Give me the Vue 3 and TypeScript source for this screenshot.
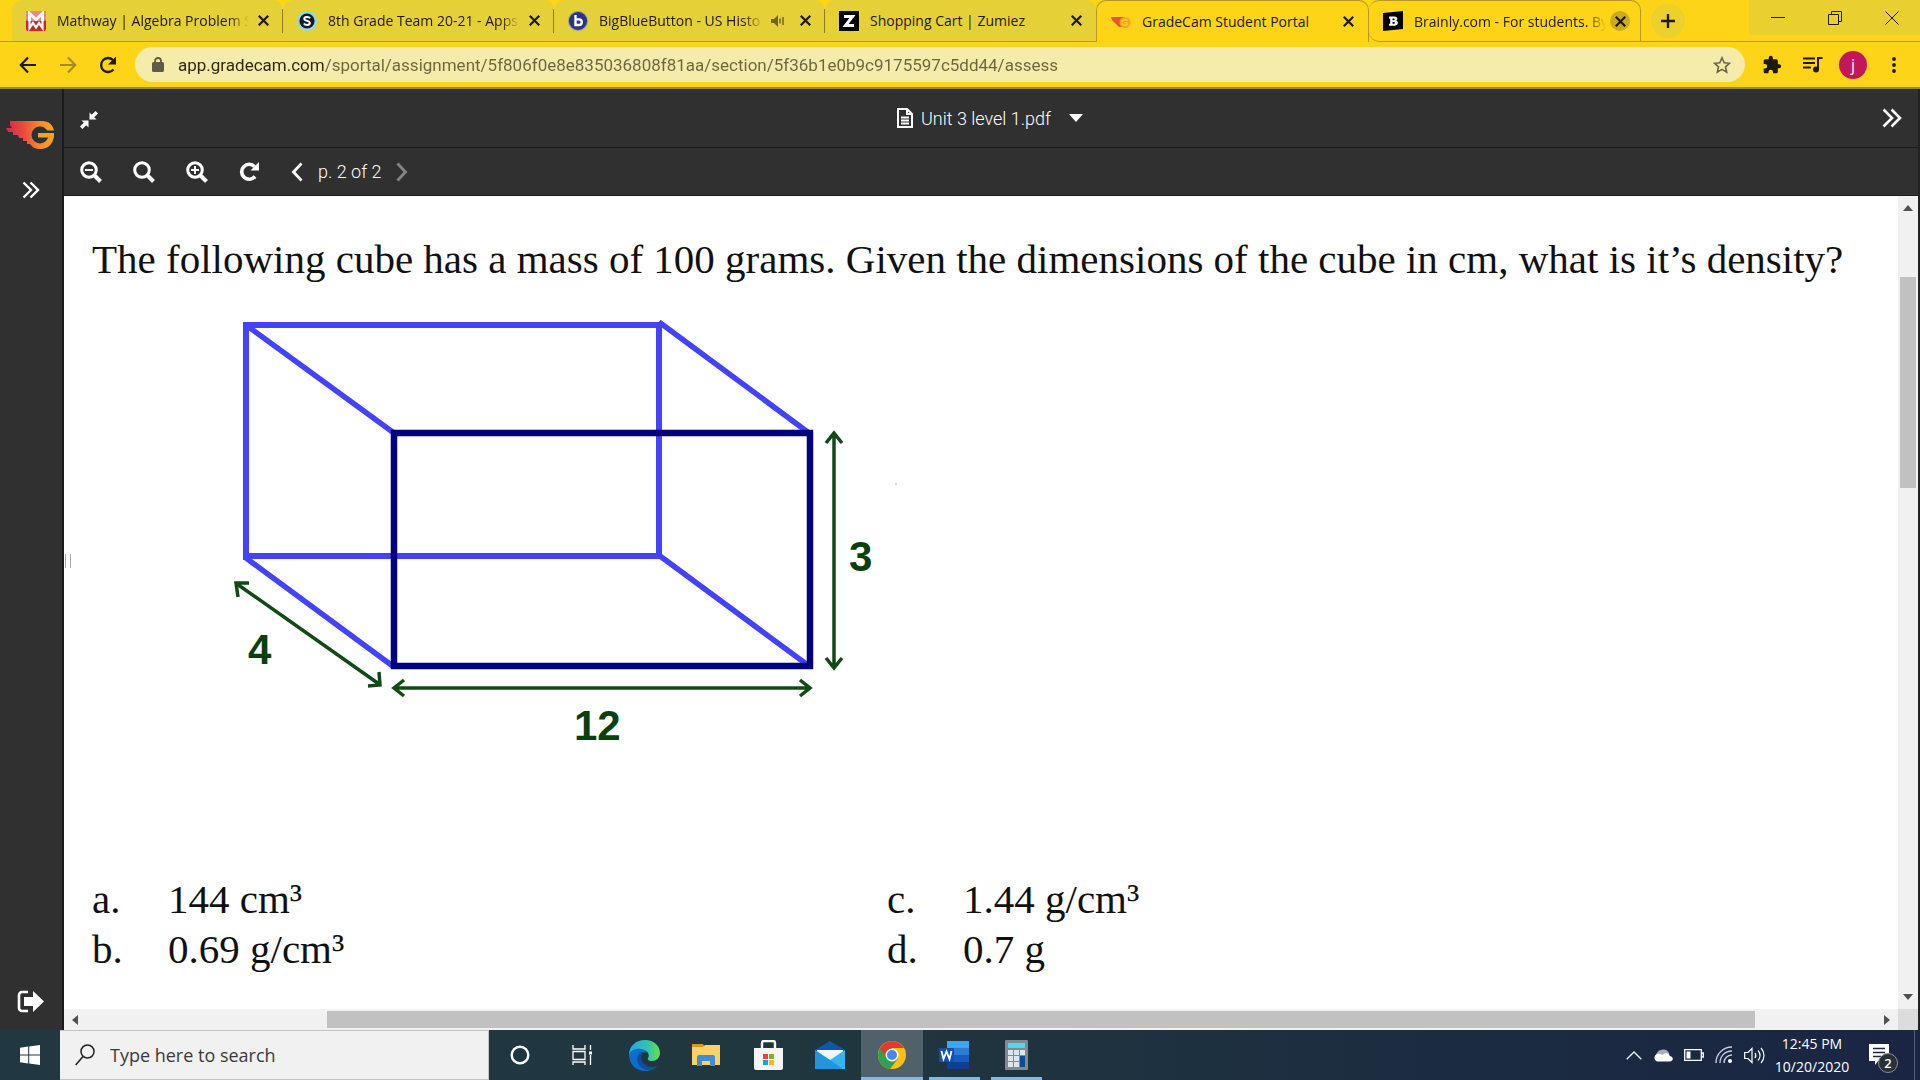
<script setup lang="ts">
import { ref } from 'vue'

interface Tab {
  id: string
  title: string
  state: 'idle' | 'active' | 'hover'
  cut?: boolean
  audio?: boolean
}

const tabs: Tab[] = [
  { id: 'mathway', title: 'Mathway | Algebra Problem S', state: 'idle', cut: true },
  { id: 'schoology', title: '8th Grade Team 20-21 - Apps', state: 'idle', cut: true },
  { id: 'bbb', title: 'BigBlueButton - US Histo', state: 'idle', cut: true, audio: true },
  { id: 'zumiez', title: 'Shopping Cart | Zumiez', state: 'idle' },
  { id: 'gradecam', title: 'GradeCam Student Portal', state: 'active' },
  { id: 'brainly', title: 'Brainly.com - For students. By', state: 'hover', cut: true },
]

const url = ref('app.gradecam.com/sportal/assignment/5f806f0e8e835036808f81aa/section/5f36b1e0b9c9175597c5dd44/assess')
const query = ref('')

const answers = [
  { key: 'a.', text: '144 cm³' },
  { key: 'c.', text: '1.44 g/cm³' },
  { key: 'b.', text: '0.69 g/cm³' },
  { key: 'd.', text: '0.7 g' },
]
</script>

<template>
  <div class="screen">
    <header class="browser">
      <div class="strip">
        <div class="strip-start"></div>
        <div class="tabs" role="tablist">
          <div v-for="t in tabs" :key="t.id" class="tab" :class="t.state" role="tab" :aria-selected="t.state === 'active'">
            <svg class="fav" viewBox="0 0 20 20" aria-hidden="true">
              <g v-if="t.id === 'mathway'">
                <rect width="20" height="20" rx="2" fill="#c9252b" />
                <rect width="20" height="10" rx="2" fill="#e58a84" />
                <path d="M3.500 10V2.500l6.500 6 6.500-6V10" fill="none" stroke="#fff" stroke-width="3" />
                <path d="M3.500 10v7l3.500-5 3 4.500 3-4.500 3.500 5v-7" fill="none" stroke="#fff" stroke-width="2.200" />
              </g>
              <g v-else-if="t.id === 'schoology'">
                <circle cx="10" cy="10" r="10" fill="#8ed8ee" />
                <circle cx="10" cy="10" r="7.600" fill="#151c22" />
                <path d="M13 7.200C12 5.600 7.300 5.500 7.300 7.800c0 2.600 5.600 1.600 5.600 4.300 0 2.500-5 2.300-6 .4" fill="none" stroke="#fff" stroke-width="2" />
              </g>
              <g v-else-if="t.id === 'bbb'">
                <circle cx="10" cy="10" r="10" fill="#8d95b8" />
                <circle cx="10" cy="10" r="9" fill="#28367f" />
                <path d="M7.500 4v10h3.500a2.800 2.800 0 0 0 0-5.600H7.500" fill="none" stroke="#fff" stroke-width="2.400" />
              </g>
              <g v-else-if="t.id === 'zumiez'">
                <rect width="20" height="20" fill="#000" />
                <path d="M5 5.500h8.500L6.500 14.500H15" fill="none" stroke="#fff" stroke-width="3" />
              </g>
              <g v-else-if="t.id === 'gradecam'">
                <path d="M0 5h13l3 3-5 7H8L1 8z" fill="#e8542c" />
                <circle cx="14" cy="10.500" r="5.500" fill="#f5a32a" />
                <path d="M16.500 8.500c-2-2-5.500-.5-5.500 2s3 3.500 5 2v-1.700h-2.500" fill="none" stroke="#fed418" stroke-width="1.400" />
              </g>
              <g v-else>
                <path d="M0 2l20-2v18L0 20z" fill="#000" />
                <path d="M6 5.500h5.500c3.500 0 3.500 4 1.500 4.300 3 .4 2.500 4.900-1.500 4.900H6v-2h1.200v-5H6zM9.500 7.500v1.700h1.300c1.200 0 1.200-1.700 0-1.700zM9.500 10.900v1.800h1.500c1.300 0 1.300-1.800 0-1.800z" fill="#fff" fill-rule="evenodd" />
              </g>
            </svg>
            <span class="title" :class="{ cut: t.cut }">{{ t.title }}</span>
            <svg v-if="t.audio" class="audio" viewBox="0 0 14 12" aria-label="Playing audio">
              <path d="M0 4h3l4-4v12L3 8H0z" fill="#6e651f" />
              <path d="M9 3.500v5M12 2v8" stroke="#6e651f" stroke-width="1.500" />
            </svg>
            <button class="tab-close" type="button" aria-label="Close tab">
              <svg viewBox="0 0 10 10"><path d="M.7.7l8.600 8.600M9.300.7L.7 9.300" stroke="#1d1a06" stroke-width="2" /></svg>
            </button>
          </div>
        </div>
        <div class="strip-add">
          <button type="button" aria-label="New tab">
            <svg viewBox="0 0 14 14"><path d="M7 0v14M0 7h14" stroke="#1d1a06" stroke-width="2.400" /></svg>
          </button>
        </div>
        <div class="window-keys">
          <button type="button" aria-label="Minimize"><svg viewBox="0 0 14 14"><path d="M0 6.500h14" /></svg></button>
          <button type="button" aria-label="Restore"><svg viewBox="0 0 14 14"><path d="M.5 3.500h10v10H.5zM3.500 3V.5h10v10H11" /></svg></button>
          <button type="button" aria-label="Close"><svg viewBox="0 0 14 14"><path d="M.5.5l13 13M13.500.5l-13 13" /></svg></button>
        </div>
      </div>

      <div class="nav">
        <button type="button" aria-label="Back"><svg width="18" height="18" viewBox="0 0 18 18"><path d="M17 9H2M9 1.500L1.800 9 9 16.500" fill="none" stroke="#1d1a06" stroke-width="2.200" /></svg></button>
        <button type="button" aria-label="Forward"><svg width="18" height="18" viewBox="0 0 18 18"><path d="M1 9h15M9 1.500L16.200 9 9 16.500" fill="none" stroke="#a48c18" stroke-width="2.200" /></svg></button>
        <button type="button" aria-label="Reload"><svg width="20" height="18" viewBox="0 0 20 18"><path d="M15.500 13.500A7 7 0 1 1 15 4" fill="none" stroke="#1d1a06" stroke-width="2.300" /><path d="M18 .5v8h-8z" fill="#1d1a06" /></svg></button>
        <label class="address">
          <svg width="12" height="15" viewBox="0 0 12 15" aria-hidden="true"><rect y="5" width="12" height="10" rx="1.500" fill="#5f5b45" /><path d="M3 6V4a3 3 0 0 1 6 0v2" fill="none" stroke="#5f5b45" stroke-width="1.800" /></svg>
          <input v-model="url" type="text" aria-label="Address" />
          <svg width="18" height="18" viewBox="0 0 18 18" aria-hidden="true"><path d="M9 1.800l2.200 5 5.300.5-4 3.600 1.200 5.300L9 13.400l-4.700 2.800 1.200-5.300-4-3.600 5.300-.5z" fill="none" stroke="#6a6648" stroke-width="1.600" /></svg>
        </label>
        <div class="extras">
          <button type="button" aria-label="Extensions"><svg width="20" height="20" viewBox="0 0 24 24"><path d="M20.500 11H19V7c0-1.100-.9-2-2-2h-4V3.500a2.500 2.500 0 0 0-5 0V5H4c-1.100 0-2 .9-2 2v3.800h1.500a2.700 2.700 0 0 1 0 5.400H2V20c0 1.100.9 2 2 2h3.800v-1.500a2.700 2.700 0 0 1 5.400 0V22H17c1.100 0 2-.9 2-2v-4h1.500a2.500 2.500 0 0 0 0-5z" fill="#1d1a06" /></svg></button>
          <button type="button" aria-label="Media"><svg width="20" height="16" viewBox="0 0 20 16"><path d="M0 1.500h12M0 6h12M0 10.500h8" stroke="#1d1a06" stroke-width="2" /><path d="M15 12V1h4.500" fill="none" stroke="#1d1a06" stroke-width="2" /><circle cx="13" cy="12.500" r="3" fill="#1d1a06" /></svg></button>
          <button class="avatar" type="button">j</button>
          <button type="button" aria-label="Menu"><svg width="4" height="16" viewBox="0 0 4 16"><g fill="#1d1a06"><circle cx="2" cy="2" r="1.900" /><circle cx="2" cy="8" r="1.900" /><circle cx="2" cy="14" r="1.900" /></g></svg></button>
        </div>
      </div>
    </header>

    <div class="app">
      <aside class="side">
        <svg width="48" height="28" viewBox="0 0 48 28" aria-label="GradeCam">
          <defs>
            <linearGradient id="flame" x1="0" x2="1"><stop offset="0" stop-color="#d5274e" /><stop offset=".35" stop-color="#e8493c" /><stop offset=".7" stop-color="#f28a2c" /><stop offset="1" stop-color="#f3a62c" /></linearGradient>
          </defs>
          <path d="M4 0h32c7 0 11 4 12 10v5c-1 8-6 13-13 13-6 0-9-2-11-5h-3v-3h-4v-3h-4l-1-3H7v-3H2L0 7h6L4 4z" fill="url(#flame)" />
          <circle cx="34" cy="14" r="8.500" fill="#303030" />
          <path d="M37 9.500h11v2.500H37z" fill="#303030" />
          <path d="M32 12h16v4.500H32z" fill="#f3a02c" />
        </svg>
        <button class="expand" type="button" aria-label="Expand"><svg width="18" height="18" viewBox="0 0 18 18"><path d="M1.500 1.500L9 9l-7.500 7.500M8.500 1.500L16 9l-7.500 7.500" fill="none" stroke="#fff" stroke-width="2.400" /></svg></button>
        <button class="exit" type="button" aria-label="Sign out"><svg width="28" height="24" viewBox="0 0 28 24"><path d="M11 2H5a3 3 0 0 0-3 3v13a3 3 0 0 0 3 3h6" fill="none" stroke="#fff" stroke-width="2.600" /><path d="M7 7h9V1l11 10.500L16 22v-6H7z" fill="#fff" /></svg></button>
      </aside>

      <main class="viewer">
        <div class="bar bar-file">
          <button class="shrink" type="button" aria-label="Exit full view"><svg width="18" height="18" viewBox="0 0 18 18"><path d="M9.500 8.500V1.500l2.300 2.300L15.500 0 18 2.500l-3.800 3.700L16.500 8.500zM8.500 9.500v7l-2.300-2.300L2.500 18 0 15.500l3.800-3.700L1.500 9.500z" fill="#fff" /></svg></button>
          <button class="file" type="button">
            <svg width="16" height="20" viewBox="0 0 16 20"><path d="M1 1h9l5 5v13H1z" fill="none" stroke="#fff" stroke-width="2" /><path d="M10 1v5h5M4 9.500h8M4 12.500h8M4 15.500h8" fill="none" stroke="#fff" stroke-width="2" /></svg>
            <span>Unit 3 level 1.pdf</span>
            <svg width="14" height="8" viewBox="0 0 14 8"><path d="M0 0h14L7 8z" fill="#fff" /></svg>
          </button>
          <button type="button" aria-label="Next panel"><svg width="20" height="20" viewBox="0 0 20 20"><path d="M1.500 1.500L10 10l-8.500 8.500M9.500 1.500L18 10l-8.500 8.500" fill="none" stroke="#fff" stroke-width="2.600" /></svg></button>
        </div>
        <div class="bar bar-page">
          <div class="zooms">
            <button type="button" aria-label="Zoom out"><svg viewBox="0 0 22 22"><circle cx="9" cy="9" r="7.300" /><path d="M14 14l6.500 6.500" stroke-width="4" /><path d="M5 9h8" stroke-width="2" /></svg></button>
            <button type="button" aria-label="Reset zoom"><svg viewBox="0 0 22 22"><circle cx="9" cy="9" r="7.300" /><path d="M14 14l6.500 6.500" stroke-width="4" /></svg></button>
            <button type="button" aria-label="Zoom in"><svg viewBox="0 0 22 22"><circle cx="9" cy="9" r="7.300" /><path d="M14 14l6.500 6.500" stroke-width="4" /><path d="M5 9h8M9 5v8" stroke-width="2" /></svg></button>
            <button type="button" aria-label="Rotate"><svg viewBox="0 0 22 22"><path d="M16 15.500A7.500 7.500 0 1 1 15.500 5.500" stroke-width="3.600" /><path d="M20 1v8.500h-8.500z" fill="#fff" stroke="none" /></svg></button>
          </div>
          <div class="pager">
            <button type="button" aria-label="Previous page"><svg width="12" height="20" viewBox="0 0 12 20"><path d="M10.500 1.500L2.500 10l8 8.500" fill="none" stroke="#fff" stroke-width="2.800" /></svg></button>
            <span>p. 2 of 2</span>
            <button type="button" aria-label="Next page"><svg width="12" height="20" viewBox="0 0 12 20"><path d="M1.500 1.500l8 8.500-8 8.500" fill="none" stroke="#858585" stroke-width="2.800" /></svg></button>
          </div>
        </div>

        <div class="doc">
          <article class="page">
            <h1>The following cube has a mass of 100 grams. Given the dimensions of the cube in cm, what is it’s density?</h1>
            <svg class="figure" width="680" height="460" viewBox="220 300 680 460" role="img" aria-label="Box 12 wide, 4 deep, 3 high">
              <g fill="none" stroke="#4343fb" stroke-width="6">
                <path d="M246 560V325H659V556H246" />
                <path d="M246 325L394 433M659 322L809 433M246 558L394 667M660 556L809 666" stroke-width="5.500" />
              </g>
              <path d="M394 433H810V666H394z" fill="none" stroke="#02027c" stroke-width="6.500" />
              <g fill="none" stroke="#114a14" stroke-width="3.500">
                <path d="M834 433V668M826 443l8-10 8 10M826 658l8 10 8-10" />
                <path d="M394 688H810M404 680l-10 8 10 8M800 680l10 8-10 8" />
                <path d="M237 584L379 684M238 597l-2-14 13 0M368 686l12-1-1-13" />
              </g>
              <circle cx="896" cy="484" r="1" fill="#c4c4c4" />
              <g font-family="'Liberation Sans', Arial, sans-serif" font-weight="700" font-size="42" fill="#0b400e">
                <text x="849" y="571">3</text>
                <text x="248" y="664">4</text>
                <text x="574" y="740">12</text>
              </g>
            </svg>
            <ol class="answers">
              <li v-for="a in answers" :key="a.key"><span>{{ a.key }}</span><span>{{ a.text }}</span></li>
            </ol>
            <span class="grip" aria-hidden="true"></span>
          </article>
          <div class="vscroll">
            <svg width="10" height="6" viewBox="0 0 10 6"><path d="M0 6h10L5 0z" fill="#505050" /></svg>
            <div class="rail-y"><div class="thumb-y"></div></div>
            <svg width="10" height="6" viewBox="0 0 10 6"><path d="M0 0h10L5 6z" fill="#505050" /></svg>
          </div>
        </div>
        <div class="hscroll">
          <svg width="6" height="10" viewBox="0 0 6 10"><path d="M6 0v10L0 5z" fill="#505050" /></svg>
          <div class="rail-x"><div class="thumb-x"></div></div>
          <svg width="6" height="10" viewBox="0 0 6 10"><path d="M0 0v10l6-5z" fill="#505050" /></svg>
          <div class="corner"></div>
        </div>
      </main>
    </div>

    <footer class="taskbar">
      <button class="start" type="button" aria-label="Start">
        <svg width="20" height="20" viewBox="0 0 20 20"><path d="M0 2.800l8.200-1.200v8H0zM9.200 1.400L20 0v9.600H9.200zM0 10.400h8.200v8L0 17.300zM9.200 10.400H20V20L9.200 18.600z" fill="#fff" /></svg>
      </button>
      <label class="search">
        <svg width="20" height="22" viewBox="0 0 20 22" aria-hidden="true"><circle cx="12.500" cy="7.500" r="6.500" fill="none" stroke="#222" stroke-width="1.500" /><path d="M8 12.500L.7 21" stroke="#222" stroke-width="1.600" /></svg>
        <input v-model="query" type="text" placeholder="Type here to search" aria-label="Search" />
      </label>
      <div class="pinned">
        <button type="button" aria-label="Cortana"><svg width="20" height="20" viewBox="0 0 20 20"><circle cx="10" cy="10" r="8.300" fill="none" stroke="#fff" stroke-width="2.400" /></svg></button>
        <button type="button" aria-label="Task view"><svg width="20" height="20" viewBox="0 0 20 20"><path d="M1 0v4h12V0M1 6.500h12v8H1zM1 20v-3h12v3M18.500 0v5M18.500 10v10" fill="none" stroke="#fff" stroke-width="1.300" /><path d="M17 6.500h3v3h-3z" fill="#fff" /></svg></button>
        <button type="button" aria-label="Edge">
          <svg width="31" height="31" viewBox="0 0 31 31">
            <defs><linearGradient id="edge-top" x1="0" x2="1"><stop offset="0" stop-color="#2aa5e0" /><stop offset=".6" stop-color="#33c3b0" /><stop offset="1" stop-color="#66e04b" /></linearGradient></defs>
            <path d="M0 15C0 6 7 0 16 0c9 0 15 6 15 13 0 5-4 8-8 8-3 0-5-1-4-3 2-3 0-8-6-8C6 10 1 13 0 15z" fill="url(#edge-top)" />
            <path d="M0 15c1-4 6-7 12-6 3 .3 5 2 6 4-5-2-8 1-8 5 0 6 5 10 11 10 3 0 5-1 7-2-2 3-7 5-12 5C7 31 0 24 0 15z" fill="#0c6ec9" />
            <path d="M12 12c-4 3-5 8-2 13s9 6 14 4l4-3c-4 2-10 1-13-2-3-3-4-8-1-12z" fill="#0d4f9c" />
          </svg>
        </button>
        <button type="button" aria-label="File Explorer"><svg width="28" height="24" viewBox="0 0 28 24"><path d="M0 1h11l2 3H0z" fill="#d9961a" /><path d="M0 4h11l2-2h15v20H0z" fill="#fbd168" /><path d="M5 23v-9a2 2 0 0 1 2-2h14a2 2 0 0 1 2 2v9h-5v-5h-8v5z" fill="#3f8fd0" /></svg></button>
        <button type="button" aria-label="Store"><svg width="29" height="30" viewBox="0 0 29 30"><path d="M8 8V3a2 2 0 0 1 2-2h9a2 2 0 0 1 2 2v5" fill="none" stroke="#fff" stroke-width="2.400" /><path d="M0 8h29v20a2 2 0 0 1-2 2H2a2 2 0 0 1-2-2z" fill="#f5f5f5" /><path d="M9 14h5v5H9z" fill="#e0492a" /><path d="M15 14h5v5h-5z" fill="#79b52a" /><path d="M9 20h5v5H9z" fill="#1e9fe2" /><path d="M15 20h5v5h-5z" fill="#fbb91f" /></svg></button>
        <button type="button" aria-label="Mail"><svg width="30" height="28" viewBox="0 0 30 28"><path d="M0 9L15 0l15 9v4H0z" fill="#0d58a8" /><path d="M2 9h26v8L15 22 2 17z" fill="#f2f6fa" /><path d="M0 9l15 10L30 9v19H0z" fill="#35b4f0" /><path d="M0 9l28 19H0z" fill="#2196dd" /></svg></button>
        <button class="running active" type="button" aria-label="Chrome"><svg width="28" height="28" viewBox="0 0 28 28"><circle cx="14" cy="14" r="14" fill="#fbc116" /><path d="M14 14L1.900 7A14 14 0 0 0 12 27.900L20 17.500z" fill="#2fa24c" /><path d="M1.900 7a14 14 0 0 1 24.200 0H14v7l-6 3z" fill="#e23b2e" /><circle cx="14" cy="14" r="6.500" fill="#fff" /><circle cx="14" cy="14" r="5" fill="#4a84ee" /></svg></button>
        <button class="running" type="button" aria-label="Word"><svg width="30" height="28" viewBox="0 0 30 28"><path d="M8 0h22v7H8z" fill="#41a5ee" /><path d="M8 7h22v7H8z" fill="#2b7cd3" /><path d="M8 14h22v7H8z" fill="#185abd" /><path d="M8 21h22v7H8z" fill="#103f91" /><rect y="7" width="15" height="14" rx="1" fill="#174fa8" /><path d="M2.500 10l2 8 3-7.500 3 7.500 2-8" fill="none" stroke="#fff" stroke-width="1.800" /></svg></button>
        <button class="running" type="button" aria-label="Calculator"><svg width="23" height="30" viewBox="0 0 23 30"><rect width="23" height="30" rx="1" fill="#7f8a93" /><path d="M3 3h17v5H3z" fill="#4fd6f2" /><path d="M3 10h5v5H3zM9 10h5v5H9zM15 10h5v5h-5zM3 16h5v5H3zM9 16h5v5H9zM3 22h5v5H3zM9 22h5v5H9z" fill="#dfe5ea" /><path d="M15 16h5v11h-5z" fill="#0f4b94" /></svg></button>
      </div>
      <div class="tray">
        <svg width="16" height="9" viewBox="0 0 16 9"><path d="M.7 8.300L8 1l7.300 7.300" fill="none" stroke="#e8eef4" stroke-width="1.400" /></svg>
        <svg width="20" height="14" viewBox="0 0 20 14"><path d="M3 8a7 7 0 0 1 13-3l1 4z" fill="#a9b0bb" /><path d="M4 13.500a4 4 0 0 1 0-7.500c2-.8 4 0 5 1l3-1.500c3-1 4 1 4.500 2.500 4 0 4.500 5 .5 5.500z" fill="#fff" /></svg>
        <svg width="20" height="12" viewBox="0 0 20 12"><path d="M.7.700h16.600v10.600H.7zM17.500 4h1.800v4h-1.800" fill="none" stroke="#fff" stroke-width="1.300" /><path d="M2.500 2.500h4v7h-4z" fill="#fff" /></svg>
        <svg width="18" height="18" viewBox="0 0 18 18"><path d="M1 17C1 8 8 1 17 1M5 17c0-7 5-12 12-12M9 17c0-4.500 3.500-8 8-8" fill="none" stroke="#c7ced8" stroke-width="1.400" /><circle cx="15" cy="15" r="2" fill="#fff" /></svg>
        <svg width="21" height="17" viewBox="0 0 21 17"><path d="M.7 5.500H4l4-4v14l-4-4H.7zM11 6c1 1.500 1 3.500 0 5M14 3.500c2.500 3 2.500 7 0 10M17 1c4 4.500 4 10.500 0 15" fill="none" stroke="#fff" stroke-width="1.200" /></svg>
        <div class="clock"><span>12:45 PM</span><span>10/20/2020</span></div>
        <div class="notes">
          <svg width="20" height="22" viewBox="0 0 20 22"><path d="M0 0h20v17H9l-3 4v-4H0z" fill="#fff" /><path d="M4 4.500h12M4 8.500h12M4 12.500h8" stroke="#1c2843" stroke-width="1.300" /></svg>
          <span class="badge">2</span>
        </div>
      </div>
    </footer>
  </div>
</template>

<style>
body {
  margin: 0;
}
</style>

<style scoped>
.screen {
  display: flex;
  flex-direction: column;
  min-height: 100vh;
  font-family: 'Open Sans', 'Noto Sans', sans-serif;
  color: #1d1a06;
}
.screen * {
  box-sizing: border-box;
}
button {
  display: flex;
  align-items: center;
  justify-content: center;
  padding: 0;
  border: 0;
  background: none;
  color: inherit;
  font: inherit;
  flex-shrink: 0;
}
svg {
  display: block;
  flex-shrink: 0;
}
input {
  border: 0;
  padding: 0;
  background: none;
  font: inherit;
  outline: 0;
  min-width: 0;
}

.browser {
  background: #fed418;
  border-bottom: 2px solid #9c8a2a;
}
.strip {
  display: flex;
  height: 42px;
}
.strip-start {
  width: 12px;
  border-bottom: 1px solid #b39b20;
}
.tabs {
  display: flex;
  flex: 1;
  min-width: 0;
}
.tab {
  position: relative;
  display: flex;
  align-items: center;
  flex: 1 1 0;
  min-width: 0;
  padding: 0 10px 0 14px;
  border-bottom: 1px solid #b39b20;
  font-size: 14px;
}
.tab.idle {
  background: #e6d038;
  border-radius: 10px 10px 0 0;
}
.tab.idle::after {
  content: '';
  position: absolute;
  right: 0;
  top: 9px;
  width: 1px;
  height: 24px;
  background: #8f7e1c;
}
.tab.idle:nth-child(4)::after {
  display: none;
}
.tab.active {
  border: 1px solid #b39b20;
  border-bottom: 0;
  border-radius: 10px 10px 0 0;
}
.tab.hover {
  border: 1px solid #b39b20;
  border-left: 0;
  border-radius: 10px 10px 0 10px;
}
.fav {
  width: 20px;
  height: 20px;
  margin-right: 11px;
}
.title {
  flex: 1;
  min-width: 0;
  overflow: hidden;
  white-space: nowrap;
}
.title.cut {
  mask-image: linear-gradient(to left, transparent, #000 20px);
}
.audio {
  width: 14px;
  height: 12px;
  margin-left: 8px;
  margin-right: 6px;
}
.tab-close {
  width: 20px;
  height: 20px;
  margin-left: 4px;
  border-radius: 50%;
}
.tab-close svg {
  width: 11px;
  height: 11px;
}
.tab.hover .tab-close {
  background: #cbab1c;
}
.strip-add {
  display: flex;
  align-items: center;
  width: 108px;
  padding-left: 10px;
  border-bottom: 1px solid #b39b20;
}
.strip-add button {
  width: 34px;
  height: 34px;
  border-radius: 50%;
  background: #ecd02c;
}
.strip-add svg {
  width: 14px;
  height: 14px;
}
.window-keys {
  display: flex;
  padding-bottom: 6px;
  border-bottom: 1px solid #b39b20;
}
.window-keys button {
  width: 57px;
  background: #e9cf30;
}
.window-keys svg {
  width: 14px;
  height: 14px;
  fill: none;
  stroke: #1d1a06;
}

.nav {
  display: flex;
  align-items: center;
  height: 45px;
  padding: 0 24px 0 8px;
}
.nav > button {
  width: 40px;
  height: 40px;
}
.address {
  display: flex;
  align-items: center;
  flex: 1;
  height: 35px;
  margin-left: 7px;
  padding: 0 14px 0 17px;
  border-radius: 18px;
  background: #f5ebab;
}
.address input {
  flex: 1;
  margin-left: 14px;
  height: 30px;
  font-family: Roboto, sans-serif;
  font-size: 17px;
  color: transparent;
  background: linear-gradient(to right, #2a270f 147px, #6a653f 147px);
  background-clip: text;
}
.extras {
  display: flex;
  align-items: center;
  margin-left: 17px;
  gap: 21px;
}
.avatar {
  width: 28px;
  height: 28px;
  margin-left: -5px;
  margin-right: 4px;
  border-radius: 50%;
  background: #c2185b;
  color: #fff;
  font-size: 16px;
}

.app {
  display: flex;
  flex: 1;
  background: #303030;
  color: #fff;
}
.side {
  display: flex;
  flex-direction: column;
  align-items: center;
  width: 64px;
  padding: 32px 2px 16px 0;
  border-right: 2px solid #1b1b1b;
}
.side button {
  margin-left: 2px;
}
.expand {
  margin-top: 32px;
}
.exit {
  margin-top: auto;
}
.viewer {
  display: flex;
  flex-direction: column;
  flex: 1;
  min-width: 0;
  border-right: 2px solid #222;
}
.bar {
  display: flex;
  align-items: center;
  border-bottom: 1px solid #1b1b1b;
  font-family: Roboto, sans-serif;
  font-size: 18px;
  font-weight: 300;
}
.bar-file {
  justify-content: space-between;
  height: 59px;
  padding: 0 16px;
}
.shrink {
  padding-top: 4px;
}
.file span {
  margin: 0 18px 0 8px;
}
.bar-page {
  height: 48px;
  padding: 0 16px;
}
.zooms {
  display: flex;
  gap: 31px;
}
.zooms svg {
  width: 22px;
  height: 22px;
  fill: none;
  stroke: #fff;
  stroke-width: 3;
}
.pager {
  display: flex;
  align-items: center;
  gap: 15px;
  margin-left: 30px;
}

.doc {
  display: flex;
  flex: 1;
}
.page {
  position: relative;
  flex: 1;
  min-width: 0;
  padding: 38px 28px 24px;
  overflow: hidden;
  background: #fff;
  color: #111;
  font-family: 'Liberation Serif', 'Times New Roman', serif;
  font-size: 41px;
  line-height: 50px;
}
h1 {
  margin: 0;
  font-size: 41px;
  font-weight: 400;
  white-space: nowrap;
}
.figure {
  margin: 16px 0 114px 128px;
}
.answers {
  display: grid;
  grid-template-columns: 795px 1fr;
  margin: 0;
  padding: 0;
  list-style: none;
}
.answers li {
  display: flex;
}
.answers li span:first-child {
  width: 76px;
}
.grip {
  position: absolute;
  left: 1px;
  top: 44%;
  width: 6px;
  height: 14px;
  border: solid #aaa;
  border-width: 0 1px;
}
.vscroll {
  display: flex;
  flex-direction: column;
  align-items: center;
  width: 20px;
  padding: 9px 0;
  background: #f1f1f1;
}
.rail-y {
  flex: 1;
  width: 16px;
}
.thumb-y {
  height: 27%;
  margin-top: 66px;
  background: #c1c1c1;
}
.hscroll {
  display: flex;
  align-items: center;
  height: 21px;
  padding-left: 8px;
  background: #f1f1f1;
}
.rail-x {
  flex: 1;
  padding: 0 7% 0 13.5%;
}
.thumb-x {
  height: 17px;
  background: #c1c1c1;
}
.corner {
  width: 20px;
  height: 21px;
  margin-left: 8px;
  background: #dcdcdc;
}

.taskbar {
  display: flex;
  height: 50px;
  background: linear-gradient(to right, #213843, #20363f 45%, #1b2c40 75%, #1a2544);
  color: #fff;
}
.start {
  width: 60px;
}
.search {
  display: flex;
  align-items: center;
  width: 429px;
  padding-left: 15px;
  border: 1px solid #c4c4c4;
  border-left: 0;
  background: #f1f1f1;
}
.search input {
  flex: 1;
  margin-left: 15px;
  font-size: 18px;
}
.search input::placeholder {
  color: #3a3a3a;
  opacity: 1;
}
.pinned {
  display: flex;
}
.pinned button {
  width: 62px;
}
.running {
  background: linear-gradient(#84b8e2, #84b8e2) center bottom / 51px 3px no-repeat;
}
.running.active {
  background: linear-gradient(#84b8e2, #84b8e2) center bottom / 100% 3px no-repeat #51616b;
}
.tray {
  display: flex;
  align-items: center;
  gap: 11px;
  margin-left: auto;
  margin-right: 5px;
  padding-right: 25px;
  border-right: 1px solid #56607a;
}
.clock {
  display: flex;
  flex-direction: column;
  align-items: center;
  width: 72px;
  font-size: 14px;
  line-height: 23px;
}
.notes {
  position: relative;
  margin-left: 10px;
}
.badge {
  position: absolute;
  left: 9px;
  top: 9px;
  width: 20px;
  height: 20px;
  border: 1px solid #8a8f98;
  border-radius: 50%;
  background: #2b2f36;
  font-size: 13px;
  font-weight: 600;
  line-height: 18px;
  text-align: center;
}
</style>
